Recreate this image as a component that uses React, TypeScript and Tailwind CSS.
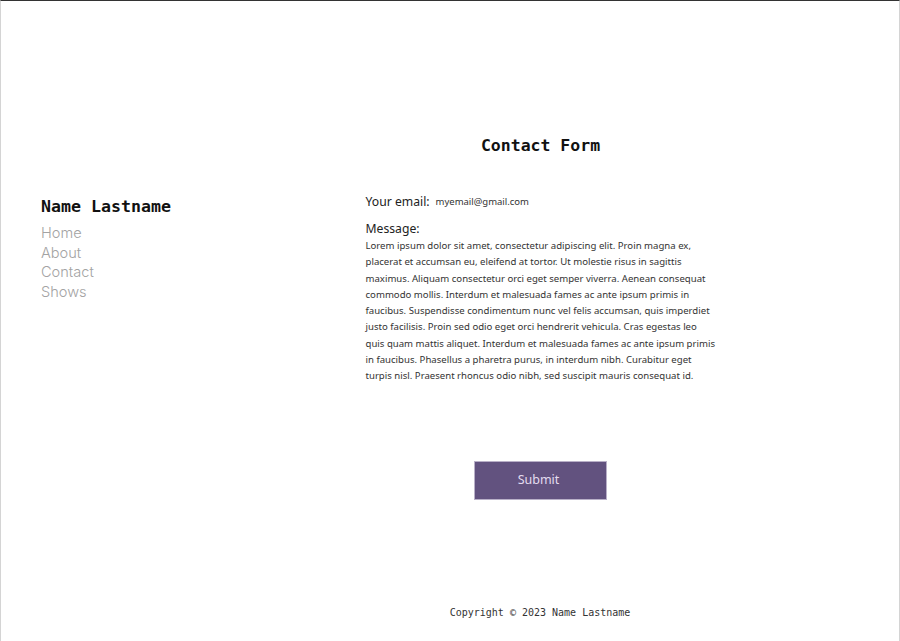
export default function App() {
  return (
    <div className="w-[900px] h-[641px] flex flex-col bg-white border-t border-t-[#333] border-x border-x-[#d4d4d4] overflow-hidden">
      <div className="flex flex-1">
        {/* Sidebar */}
        <aside className="w-[181px] pl-[40px] pt-[194px]">
          <h2 className="font-['DejaVu_Sans_Mono',monospace] font-bold text-[16.6px] leading-[24px] text-[#111] whitespace-nowrap">
            Name Lastname
          </h2>
          <nav className="mt-[5px] flex flex-col font-['Inter',sans-serif] font-light text-[14.6px] leading-[19.5px] text-[#a3a3a3]">
            <a href="#">Home</a>
            <a href="#">About</a>
            <a href="#">Contact</a>
            <a href="#">Shows</a>
          </nav>
        </aside>

        {/* Main */}
        <main className="flex-1 flex flex-col items-center pt-[133px]">
          <h1 className="font-['DejaVu_Sans_Mono',monospace] font-bold text-[16.5px] leading-[24px] text-[#111]">
            Contact Form
          </h1>
          <form className="w-[350px] mt-[35px] font-['Noto_Sans',sans-serif] text-[#222]">
            <div className="flex items-center gap-[6px] h-[18px]">
              <label className="text-[12.2px]">Your email:</label>
              <span className="text-[9.5px] text-[#333]">myemail@gmail.com</span>
            </div>
            <label className="block mt-[9px] text-[12.2px] leading-[18px]">Message:</label>
            <p className="text-[9.6px] leading-[16.3px] text-[#333]">
              Lorem ipsum dolor sit amet, consectetur adipiscing elit. Proin magna ex, placerat et accumsan eu,
              eleifend at tortor. Ut molestie risus in sagittis maximus. Aliquam consectetur orci eget semper
              viverra. Aenean consequat commodo mollis. Interdum et malesuada fames ac ante ipsum primis in
              faucibus. Suspendisse condimentum nunc vel felis accumsan, quis imperdiet justo facilisis. Proin sed
              odio eget orci hendrerit vehicula. Cras egestas leo quis quam mattis aliquet. Interdum et malesuada
              fames ac ante ipsum primis in faucibus. Phasellus a pharetra purus, in interdum nibh. Curabitur eget
              turpis nisl. Praesent rhoncus odio nibh, sed suscipit mauris consequat id.
            </p>
            <div className="flex justify-center mt-[76px]">
              <button
                type="button"
                className="w-[133px] h-[39px] pr-[4px] bg-[#62527f] border border-[#b9b0c8] text-[#e4dcef] text-[12.5px]"
              >
                Submit
              </button>
            </div>
          </form>
        </main>
      </div>
      <footer className="h-[36px] pl-[180px] flex justify-center font-['DejaVu_Sans_Mono',monospace] text-[10px] text-[#333]">
        <span>Copyright © 2023 Name Lastname</span>
      </footer>
    </div>
  );
}
